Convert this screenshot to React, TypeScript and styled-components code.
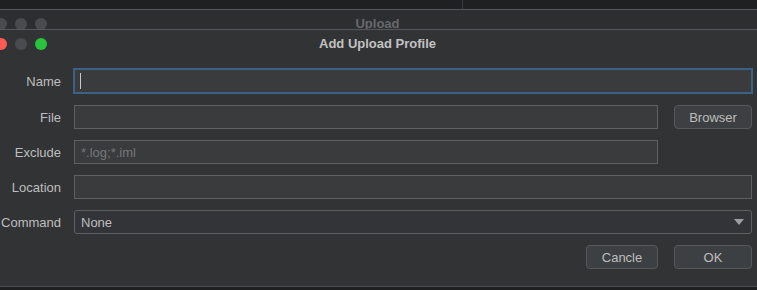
import React from "react";
import styled, { createGlobalStyle } from "styled-components";

const GlobalStyle = createGlobalStyle`
  html, body {
    margin: 0;
    padding: 0;
    background: #323335;
    overflow: hidden;
  }
  body {
    font-family: "Liberation Sans", Arial, sans-serif;
    font-size: 13px;
    color: #bcbcbc;
  }
`;

const Screen = styled.div`
  width: 757px;
  height: 290px;
  display: flex;
  flex-direction: column;
  background: #323335;
`;

const TopStrip = styled.div`
  height: 9px;
  display: flex;
  background: #1f2022;
  border-bottom: 1px solid #55565a;
  flex-shrink: 0;
`;

const StripPane = styled.div`
  width: 462px;
  border-right: 1px solid #3a3b3e;
`;

const TitleBar = styled.div`
  height: 28px;
  background: #323335;
  display: grid;
  grid-template-columns: 1fr auto 1fr;
  align-items: center;
  flex-shrink: 0;
`;

// the parent window peeks out above the dialog, its bar is cut off at the bottom
const ParentBar = styled(TitleBar)`
  box-sizing: content-box;
  background: #2d2e30;
  border-bottom: 1px solid #57585b;
  align-items: start;
  padding-top: 8px;
  height: 11px;
  overflow: hidden;
`;

const Lights = styled.div`
  display: flex;
  gap: 8px;
  margin-left: -5px;
`;

const Light = styled.span<{ $color: string }>`
  width: 12px;
  height: 12px;
  border-radius: 50%;
  background: ${(p) => p.$color};
`;

const Title = styled.div<{ $dim?: boolean }>`
  font-weight: bold;
  font-size: 13px;
  line-height: 15px;
  color: ${(p) => (p.$dim ? "#68696c" : "#c2c2c2")};
  margin: ${(p) => (p.$dim ? "-2px 0 0 -2px" : "0 0 2px -2px")};
`;

const Body = styled.div`
  flex: 1;
  display: grid;
  grid-template-columns: 74px 1fr 94px;
  align-content: start;
  row-gap: 11px;
  align-items: center;
  padding: 10px 5px 0 0;
  border-bottom: 1px solid #4c4d50;
`;

const Label = styled.label`
  grid-column: 1;
  text-align: right;
  padding-right: 13px;
  white-space: nowrap;
  color: #bebebe;
`;

const Field = styled.div<{ $span?: boolean; $focused?: boolean; $rounded?: boolean }>`
  grid-column: ${(p) => (p.$span ? "2 / -1" : "2 / 3")};
  height: ${(p) => (p.$focused ? 26 : 24)}px;
  box-sizing: border-box;
  border: ${(p) => (p.$focused ? "2px solid #3d6184" : "1px solid #5f6062")};
  margin: ${(p) => (p.$focused ? "0 -1px" : "0")};
  border-radius: ${(p) => (p.$rounded ? 3 : 0)}px;
  background: ${(p) => (p.$rounded ? "#333437" : "#393b3d")};
  display: flex;
  align-items: center;
  padding: 0 ${(p) => (p.$focused ? 5 : 6)}px;
  color: #bebebe;
`;

const Placeholder = styled.span`
  color: #767779;
`;

const Caret = styled.span`
  width: 1px;
  height: 16px;
  background: #c8c8c8;
`;

const Arrow = styled.span`
  margin-left: auto;
  margin-right: 1px;
  width: 0;
  height: 0;
  border-left: 5px solid transparent;
  border-right: 5px solid transparent;
  border-top: 6px solid #9c9d9f;
`;

const Button = styled.button<{ $width: number }>`
  width: ${(p) => p.$width}px;
  height: 24px;
  box-sizing: border-box;
  border: 1px solid #56585a;
  border-radius: 4px;
  background: #3d4042;
  color: #bebebe;
  font-family: inherit;
  font-size: 13px;
  padding: 0;
`;

const SideButton = styled(Button)`
  grid-column: 3;
  justify-self: end;
`;

const Footer = styled.div`
  grid-column: 2 / -1;
  display: flex;
  justify-content: flex-end;
  gap: 16px;
`;

const BottomEdge = styled.div`
  height: 3px;
  background: #1e1f21;
  flex-shrink: 0;
`;

export default function App() {
  return (
    <>
      <GlobalStyle />
      <Screen>
        <TopStrip>
          <StripPane />
        </TopStrip>
        <ParentBar>
          <Lights>
            <Light $color="#4a4b4e" />
            <Light $color="#4a4b4e" />
            <Light $color="#4a4b4e" />
          </Lights>
          <Title $dim>Upload</Title>
          <div />
        </ParentBar>
        <TitleBar>
          <Lights>
            <Light $color="#fc5a55" />
            <Light $color="#4a4b4e" />
            <Light $color="#28c43c" />
          </Lights>
          <Title>Add Upload Profile</Title>
          <div />
        </TitleBar>
        <Body>
          <Label>Name</Label>
          <Field $span $focused>
            <Caret />
          </Field>

          <Label>File</Label>
          <Field />
          <SideButton $width={78}>Browser</SideButton>

          <Label>Exclude</Label>
          <Field>
            <Placeholder>*.log;*.iml</Placeholder>
          </Field>

          <Label>Location</Label>
          <Field $span />

          <Label>Command</Label>
          <Field $span $rounded>
            None
            <Arrow />
          </Field>

          <Footer>
            <Button $width={72}>Cancle</Button>
            <Button $width={78}>OK</Button>
          </Footer>
        </Body>
        <BottomEdge />
      </Screen>
    </>
  );
}
